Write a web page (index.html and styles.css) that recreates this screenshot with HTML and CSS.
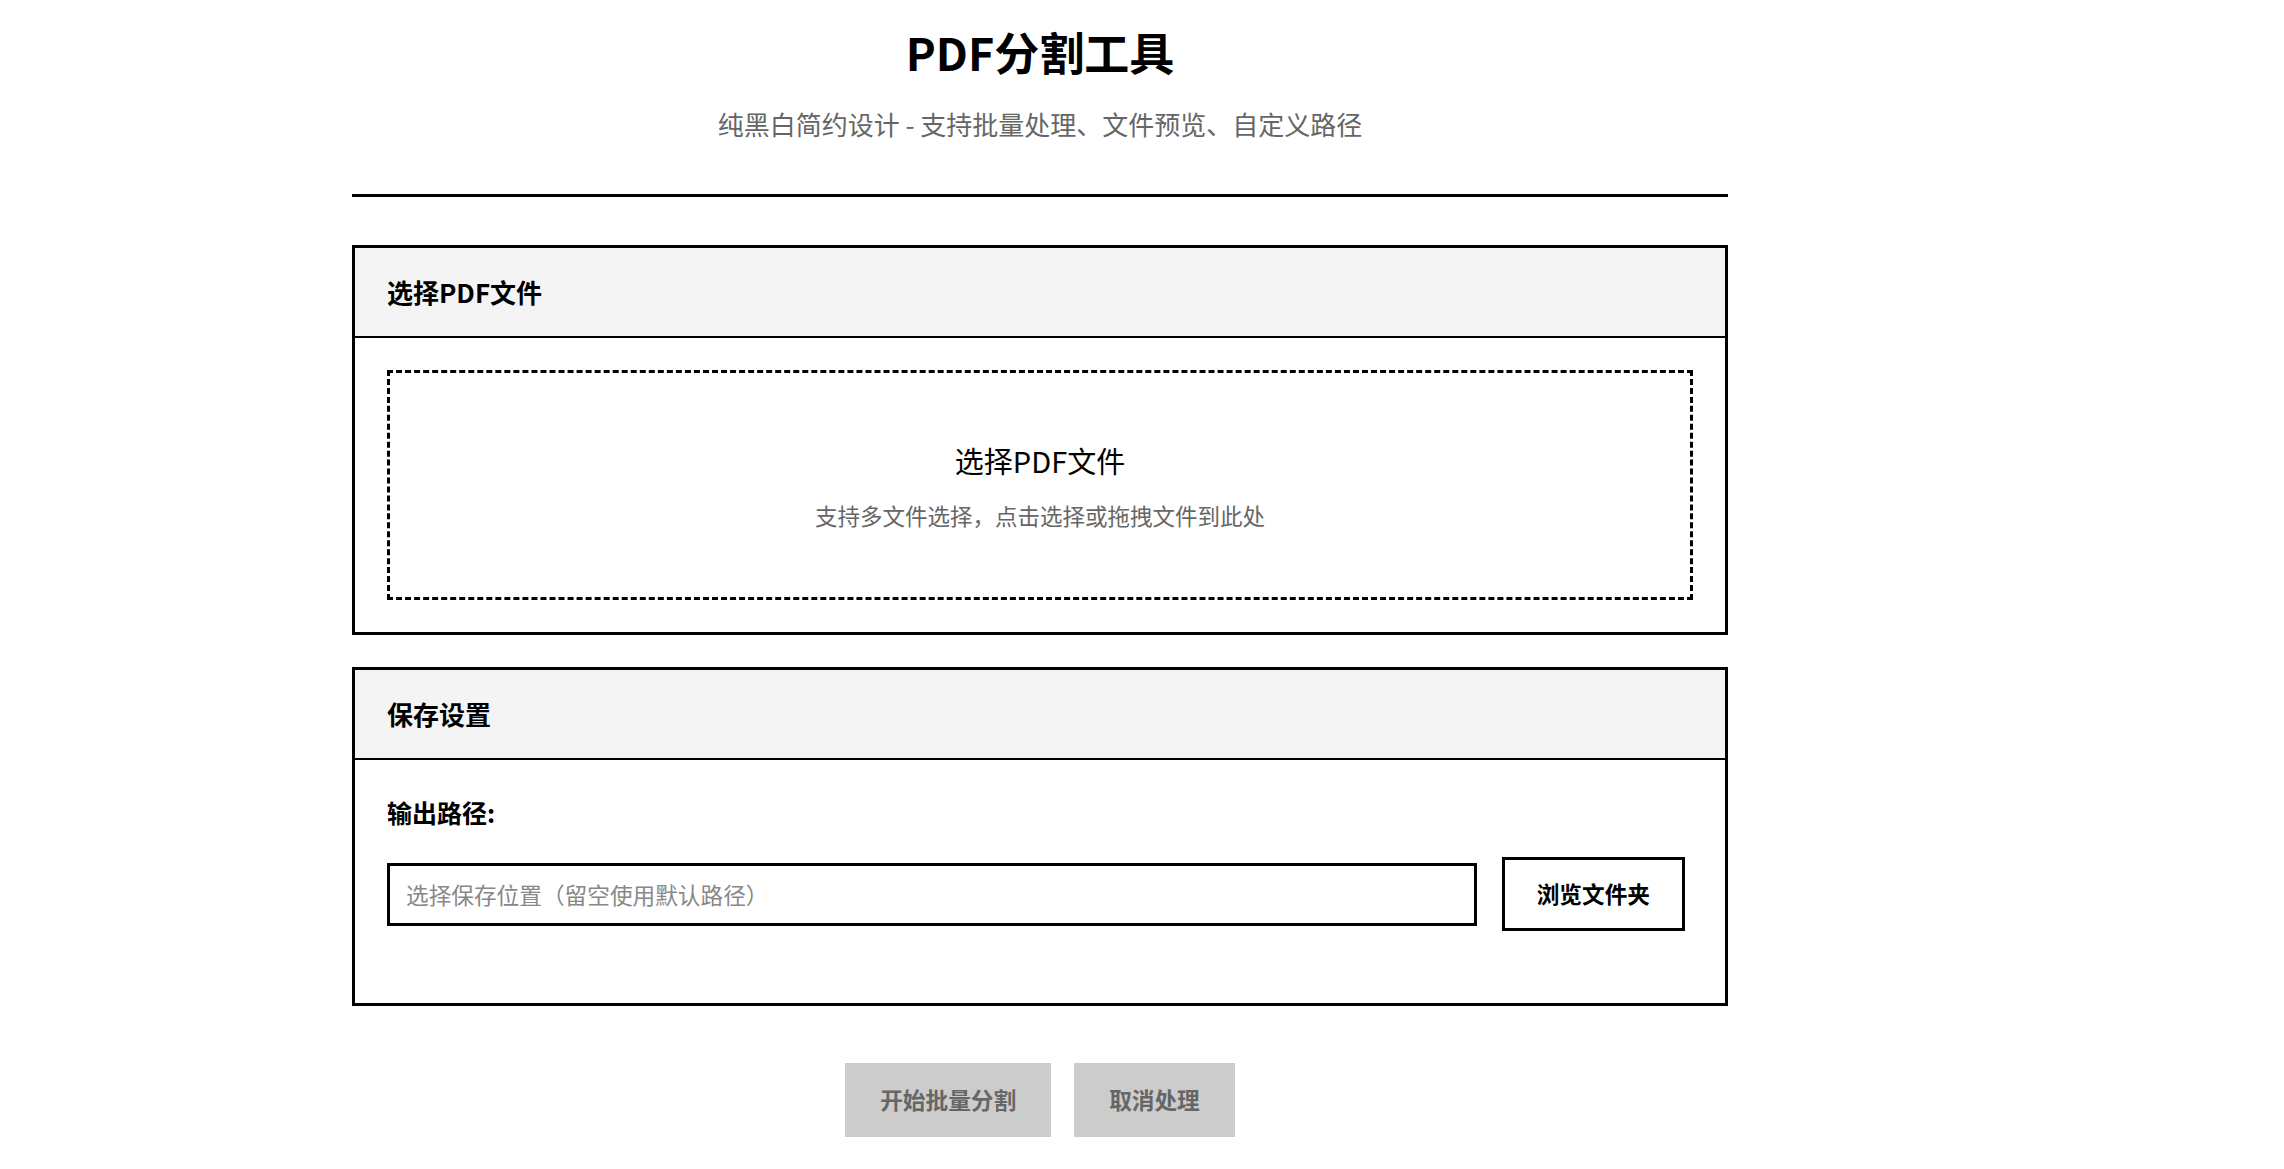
FILE: index.html
```html
<!DOCTYPE html>
<html lang="zh-CN">
<head>
<meta charset="utf-8">
<title>PDF分割工具</title>
<link rel="stylesheet" href="styles.css">
</head>
<body>
<div class="app">
  <header class="page-header">
    <h1 class="title">PDF分割工具</h1>
    <p class="subtitle">纯黑白简约设计 - 支持批量处理、文件预览、自定义路径</p>
  </header>

  <section class="card">
    <div class="card-header">选择PDF文件</div>
    <div class="card-body">
      <div class="dropzone">
        <div class="drop-title">选择PDF文件</div>
        <div class="drop-hint">支持多文件选择，点击选择或拖拽文件到此处</div>
      </div>
    </div>
  </section>

  <section class="card">
    <div class="card-header">保存设置</div>
    <div class="card-body">
      <div class="form-group">
        <label class="form-label">输出路径:</label>
        <div class="input-row">
          <input class="path-input" type="text" placeholder="选择保存位置（留空使用默认路径）">
          <button class="btn btn-outline">浏览文件夹</button>
        </div>
      </div>
    </div>
  </section>

  <div class="actions">
    <button class="btn btn-disabled">开始批量分割</button>
    <button class="btn btn-disabled">取消处理</button>
  </div>
</div>
</body>
</html>
```

FILE: styles.css
```css
* {
  box-sizing: border-box;
}

html, body {
  margin: 0;
  padding: 0;
  background: #ffffff;
}

body {
  font-family: "Noto Sans CJK SC", "Noto Sans", sans-serif;
  color: #000;
}

.app {
  width: 1376px;
  margin: 0 0 0 352px;
  padding-top: 21px;
}

.page-header {
  text-align: center;
  border-bottom: 3px solid #000;
  padding-bottom: 50px;
  margin-bottom: 48px;
}

.title {
  margin: 0;
  font-size: 45px;
  font-weight: 700;
  line-height: 62px;
}

.subtitle {
  margin: 21px 0 0;
  font-size: 26px;
  line-height: 40px;
  color: #666;
}

.card {
  border: 3px solid #000;
  margin-bottom: 32px;
}

.card-header {
  background: #f4f4f4;
  border-bottom: 2px solid #000;
  padding: 24px 32px;
  font-size: 26px;
  font-weight: 700;
  line-height: 40px;
}

.card-body {
  padding: 32px;
}

.dropzone {
  border: 3px dashed #000;
  padding: 65px 32px 66px;
  text-align: center;
}

.drop-title {
  font-size: 29px;
  line-height: 44px;
  margin-bottom: 17px;
}

.drop-hint {
  font-size: 22.5px;
  line-height: 32px;
  color: #666;
}

.form-group {
  margin-bottom: 40px;
}

.form-label {
  display: block;
  font-size: 25px;
  font-weight: 700;
  line-height: 40px;
  margin-bottom: 25px;
}

.input-row {
  display: flex;
  align-items: center;
  gap: 25px;
}

.path-input {
  flex: 1;
  height: 63px;
  border: 3px solid #000;
  padding: 0 16px;
  font-family: inherit;
  font-size: 22.67px;
  color: #000;
  outline: none;
  background: #fff;
}

.path-input::placeholder {
  color: #888;
}

.btn {
  font-family: inherit;
  font-size: 22.67px;
  font-weight: 700;
  line-height: 36px;
  padding: 16px 32px;
  border: 3px solid #000;
  background: #fff;
  color: #000;
  cursor: pointer;
}

.btn-outline {
  margin-right: 8px;
}

.btn-disabled {
  background: #ccc;
  border-color: #ccc;
  color: #666;
  cursor: not-allowed;
}

.actions {
  display: flex;
  justify-content: center;
  gap: 23px;
  margin-top: 57px;
}
```
